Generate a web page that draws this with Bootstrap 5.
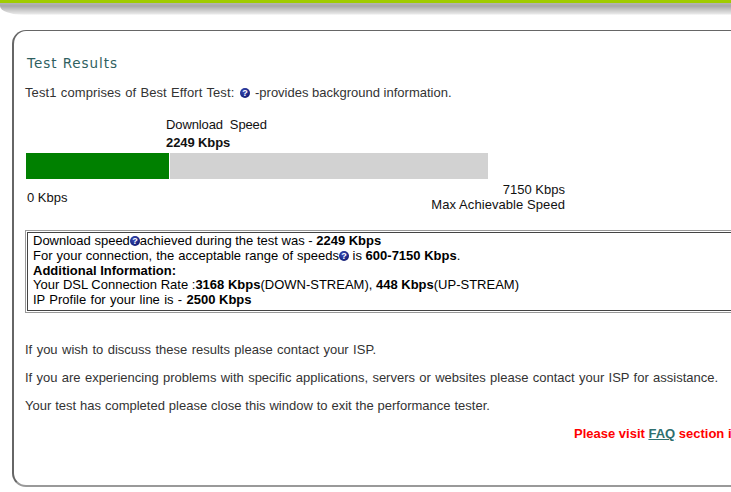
<!DOCTYPE html>
<html lang="en">
<head>
    <meta charset="UTF-8">
    <meta name="viewport" content="width=device-width, initial-scale=1.0">
    <title>Test Results</title>
    <link rel="stylesheet" href="https://cdn.jsdelivr.net/npm/bootstrap@5.3.0/dist/css/bootstrap.min.css">
    <style>
        html, body { height: 100%; overflow: hidden; }
        body { background: #fff; color: #111; font-family: "Liberation Sans", Arial, sans-serif; font-size: 13px; line-height: 15px; }
        .top-bar { height: 15px; background: linear-gradient(#a0cc00 0, #a0cc00 3px, #b4b4b4 3px, #a8a8a8 6px, #e8e8e8 14px, #fff 15px); border-bottom-left-radius: 24px 9px; }
        .panel { width: 800px; height: 457px; margin: 15px 0 0 12px; padding: 24px 0 0 13px; border: 2px solid #666; border-width: 1px 0 2px 2px; border-bottom-color: #999; border-radius: 14px 0 0 14px; }
        .title { font-family: "DejaVu Sans", sans-serif; font-size: 13.5px; line-height: 16px; letter-spacing: .95px; color: #2f5f5f; margin: 0; font-weight: 400; }
        .intro { margin: 14px 0 0 -2px; color: #333; }
        .intro .lead-in { word-spacing: .5px; letter-spacing: .1px; }
        .intro .help { margin: 0 1px 0 6px; }
        .bar-caption { margin: 17px 0 0 139px; height: 36px; }
        .bar-caption div:first-child { letter-spacing: -.12px; }
        .bar-caption div:last-child { margin-top: 3px; letter-spacing: -.1px; }
        .speed-bar { width: 462px; height: 26px; margin-left: -1px; border-radius: 0; background: #d2d2d2; }
        .speed-bar .progress-bar { background: #008000; border-right: 1px solid #fff; }
        .scale { width: 538px; margin: 3px 0 0 0; height: 32px; }
        .scale .low { margin-top: 8px; }
        .scale .max-label { letter-spacing: .07px; }
        .result-box { width: 760px; height: 83px; margin: 16px 0 0 -2px; padding: 1px; border: 1px solid #999; }
        .result-box > div { height: 79px; padding: 1px 5px; line-height: 14.8px; border: 1px solid #444; color: #000; }
        .result-box .wide { word-spacing: .35px; }
        .result-box .wider { word-spacing: .7px; }
        .notes { margin: 29px 0 0 -2px; color: #333; }
        .notes p { margin: 0 0 13px; }
        .notes p:nth-child(1) { word-spacing: .8px; }
        .notes p:nth-child(2) { word-spacing: .7px; }
        .notes p:nth-child(3) { word-spacing: .3px; }
        .faq-note { margin: 13px 0 0 547px; color: #f00; white-space: nowrap; font-weight: 700; }
        .faq-note a { color: #2f6f6f; }
        .help { width: 10px; height: 10px; vertical-align: -1px; }
        .help text { font-family: "Liberation Sans", sans-serif; font-size: 9px; font-weight: 700; fill: #fff; text-anchor: middle; }
    </style>
</head>
<body>
    <svg width="0" height="0" class="position-absolute">
        <defs>
            <radialGradient id="helpFill" cx="40%" cy="35%" r="70%">
                <stop offset="0" stop-color="#3a4cb8"/>
                <stop offset="1" stop-color="#101a70"/>
            </radialGradient>
        </defs>
    </svg>

    <div class="top-bar"></div>

    <div class="panel">
        <h1 class="title">Test Results</h1>
        <div class="intro"><span class="lead-in">Test1 comprises of Best Effort Test:</span><svg class="help" viewBox="0 0 10 10"><circle cx="5" cy="5" r="5" fill="url(#helpFill)"/><text x="5" y="8.2">?</text></svg> -provides background information.</div>

        <div class="bar-caption">
            <div>Download&nbsp; Speed</div>
            <div class="fw-bold">2249 Kbps</div>
        </div>
        <div class="progress speed-bar">
            <div class="progress-bar" style="width: 144px"></div>
        </div>
        <div class="scale d-flex justify-content-between">
            <div class="low">0 Kbps</div>
            <div class="text-end">7150 Kbps<br><span class="max-label">Max Achievable Speed</span></div>
        </div>

        <div class="result-box">
            <div>
                Download speed<svg class="help" viewBox="0 0 10 10"><circle cx="5" cy="5" r="5" fill="url(#helpFill)"/><text x="5" y="8.2">?</text></svg>achieved during the test was - <b>2249 Kbps</b><br>
                <span class="wide">For your connection, the acceptable range of speeds</span><svg class="help" viewBox="0 0 10 10"><circle cx="5" cy="5" r="5" fill="url(#helpFill)"/><text x="5" y="8.2">?</text></svg> is <b>600-7150 Kbps</b>.<br>
                <b>Additional Information:</b><br>
                Your DSL Connection Rate :<b>3168 Kbps</b>(DOWN-STREAM), <b>448 Kbps</b>(UP-STREAM)<br>
                <span class="wider">IP Profile for your line is - </span><b>2500 Kbps</b>
            </div>
        </div>

        <div class="notes">
            <p>If you wish to discuss these results please contact your ISP.</p>
            <p>If you are experiencing problems with specific applications, servers or websites please contact your ISP for assistance.</p>
            <p>Your test has completed please close this window to exit the performance tester.</p>
        </div>
        <div class="faq-note">Please visit <a href="#">FAQ</a> section i</div>
    </div>

    <script src="https://cdn.jsdelivr.net/npm/bootstrap@5.3.0/dist/js/bootstrap.bundle.min.js"></script>
</body>
</html>
